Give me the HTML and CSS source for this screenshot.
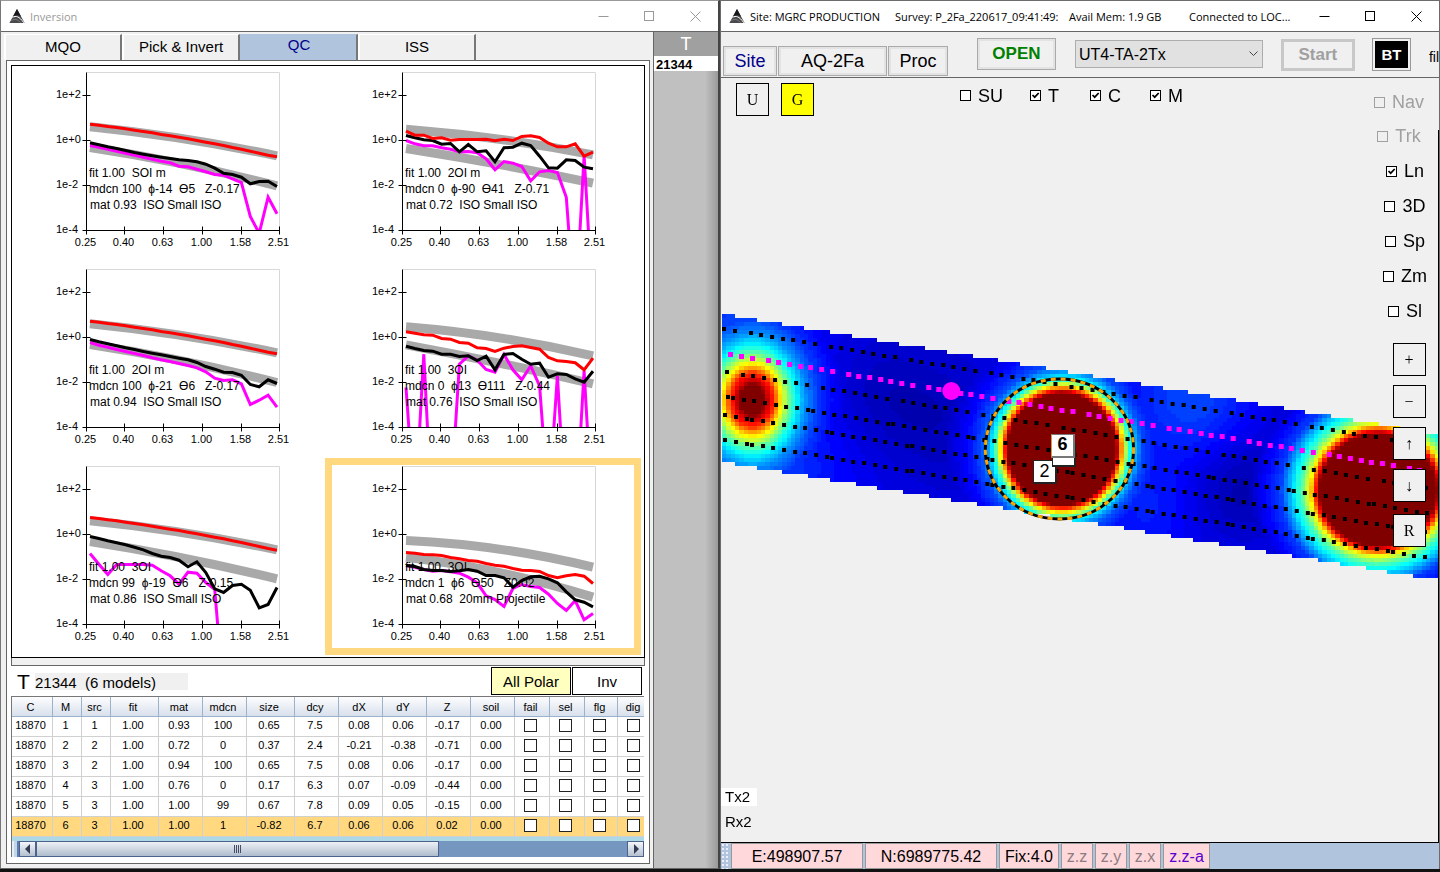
FILE: index.html
```html
<!DOCTYPE html>
<html lang="en">
<head>
<meta charset="utf-8">
<title>Inversion</title>
<link rel="stylesheet" href="styles.css">
</head>
<body>
<svg class="defs" aria-hidden="true">
  <symbol id="logo" viewBox="0 0 16 16">
    <path d="M8 1 L15.600 15 H0.400 Z" fill="#4a4a4e"/>
    <path d="M8 1 L12 8.500 C9 6.800 6.500 7.200 4 8.400 Z" fill="#17171c"/>
    <path d="M3.500 9.300 C7 7.600 10 8 14.800 14.800" fill="none" stroke="#fff" stroke-width="1"/>
    <path d="M2.500 12.500 C6 10.500 9 11.500 11.500 14.800" fill="none" stroke="#999" stroke-width=".6"/>
  </symbol>
  <symbol id="min" viewBox="0 0 11 11"><path d="M0.500 5.500 H10.500" stroke="currentColor"/></symbol>
  <symbol id="max" viewBox="0 0 11 11"><rect x=".5" y=".5" width="9" height="9" fill="none" stroke="currentColor"/></symbol>
  <symbol id="close" viewBox="0 0 11 11"><path d="M.5 .5 L10.500 10.500 M10.500 .5 L.5 10.500" stroke="currentColor"/></symbol>
</svg>

<main class="desktop">
<section class="window inversion">
  <header class="titlebar inactive">
    <svg class="logo"><use href="#logo"/></svg>
    <span class="caption">Inversion</span>
    <div class="controls">
      <button aria-label="Minimize"><svg><use href="#min"/></svg></button>
      <button aria-label="Maximize"><svg><use href="#max"/></svg></button>
      <button aria-label="Close"><svg><use href="#close"/></svg></button>
    </div>
  </header>
  <div class="inversion-body">
    <div class="work">
      <nav class="tabs">
        <button>MQO</button>
        <button>Pick &amp; Invert</button>
        <button class="current">QC</button>
        <button>ISS</button>
      </nav>
      <div class="pane">
        <div class="charts" id="charts"></div>
        <div class="splitter"></div>
        <div class="model-bar">
          <span class="big-t">T</span>
          <span class="model-label">21344&nbsp; (6 models)</span>
          <div class="model-actions">
            <button class="polar">All Polar</button>
            <button>Inv</button>
          </div>
        </div>
        <div class="grid">
          <table>
            <colgroup>
              <col class="w41"><col class="w29"><col class="w29"><col class="w48"><col class="w44"><col class="w44"><col class="w48"><col class="w44"><col class="w44"><col class="w44"><col class="w44"><col class="w44"><col class="w35"><col class="w35"><col class="w33"><col>
            </colgroup>
            <thead>
              <tr><th>C</th><th>M</th><th>src</th><th>fit</th><th>mat</th><th>mdcn</th><th>size</th><th>dcy</th><th>dX</th><th>dY</th><th>Z</th><th>soil</th><th>fail</th><th>sel</th><th>flg</th><th>dig</th></tr>
            </thead>
            <tbody>
              <tr><td>18870</td><td>1</td><td>1</td><td>1.00</td><td>0.93</td><td>100</td><td>0.65</td><td>7.5</td><td>0.08</td><td>0.06</td><td>-0.17</td><td>0.00</td><td><input type="checkbox" aria-label="fail 1"></td><td><input type="checkbox" aria-label="sel 1"></td><td><input type="checkbox" aria-label="flg 1"></td><td><input type="checkbox" aria-label="dig 1"></td></tr>
              <tr><td>18870</td><td>2</td><td>2</td><td>1.00</td><td>0.72</td><td>0</td><td>0.37</td><td>2.4</td><td>-0.21</td><td>-0.38</td><td>-0.71</td><td>0.00</td><td><input type="checkbox" aria-label="fail 2"></td><td><input type="checkbox" aria-label="sel 2"></td><td><input type="checkbox" aria-label="flg 2"></td><td><input type="checkbox" aria-label="dig 2"></td></tr>
              <tr><td>18870</td><td>3</td><td>2</td><td>1.00</td><td>0.94</td><td>100</td><td>0.65</td><td>7.5</td><td>0.08</td><td>0.06</td><td>-0.17</td><td>0.00</td><td><input type="checkbox" aria-label="fail 3"></td><td><input type="checkbox" aria-label="sel 3"></td><td><input type="checkbox" aria-label="flg 3"></td><td><input type="checkbox" aria-label="dig 3"></td></tr>
              <tr><td>18870</td><td>4</td><td>3</td><td>1.00</td><td>0.76</td><td>0</td><td>0.17</td><td>6.3</td><td>0.07</td><td>-0.09</td><td>-0.44</td><td>0.00</td><td><input type="checkbox" aria-label="fail 4"></td><td><input type="checkbox" aria-label="sel 4"></td><td><input type="checkbox" aria-label="flg 4"></td><td><input type="checkbox" aria-label="dig 4"></td></tr>
              <tr><td>18870</td><td>5</td><td>3</td><td>1.00</td><td>1.00</td><td>99</td><td>0.67</td><td>7.8</td><td>0.09</td><td>0.05</td><td>-0.15</td><td>0.00</td><td><input type="checkbox" aria-label="fail 5"></td><td><input type="checkbox" aria-label="sel 5"></td><td><input type="checkbox" aria-label="flg 5"></td><td><input type="checkbox" aria-label="dig 5"></td></tr>
              <tr class="selected"><td>18870</td><td>6</td><td>3</td><td>1.00</td><td>1.00</td><td>1</td><td>-0.82</td><td>6.7</td><td>0.06</td><td>0.06</td><td>0.02</td><td>0.00</td><td><input type="checkbox" aria-label="fail 6"></td><td><input type="checkbox" aria-label="sel 6"></td><td><input type="checkbox" aria-label="flg 6"></td><td><input type="checkbox" aria-label="dig 6"></td></tr>
            </tbody>
          </table>
          <div class="hscroll">
            <span class="grip"></span>
            <button aria-label="Scroll left"><svg viewBox="0 0 8 10"><path d="M6 0 V10 L1 5Z" fill="#333c55"/></svg></button>
            <span class="thumb"><svg viewBox="0 0 8 8"><path d="M.5 0V8M2.500 0V8M4.500 0V8M6.500 0V8" stroke="#444c66"/></svg></span>
            <span class="track"></span>
            <button aria-label="Scroll right"><svg viewBox="0 0 8 10"><path d="M2 0 V10 L7 5Z" fill="#333c55"/></svg></button>
          </div>
        </div>
      </div>
    </div>
    <aside class="targets">
      <h2>T</h2>
      <p>21344</p>
    </aside>
  </div>
</section>

<section class="window survey">
  <header class="titlebar">
    <svg class="logo"><use href="#logo"/></svg>
    <div class="captions">
      <span class="c-site">Site: MGRC PRODUCTION</span>
      <span class="c-survey">Survey: P_2Fa_220617_09:41:49:</span>
      <span class="c-mem">Avail Mem: 1.9 GB</span>
      <span>Connected to LOC...</span>
    </div>
    <div class="controls">
      <button aria-label="Minimize"><svg><use href="#min"/></svg></button>
      <button aria-label="Maximize"><svg><use href="#max"/></svg></button>
      <button aria-label="Close"><svg><use href="#close"/></svg></button>
    </div>
  </header>
  <div class="toolbar">
    <div class="menu">
      <button class="site">Site</button>
      <button class="aq">AQ-2Fa</button>
      <button class="proc">Proc</button>
    </div>
    <button class="open">OPEN</button>
    <select aria-label="Configuration"><option>UT4-TA-2Tx</option></select>
    <button class="start" disabled>Start</button>
    <button class="bt"><span>BT</span></button>
    <span class="file">fil</span>
  </div>
  <div class="map">
    <canvas id="heat" width="166" height="67"></canvas>
    <svg class="overlay" id="overlay" viewBox="0 0 717 764" preserveAspectRatio="none" aria-hidden="true"></svg>
    <span class="pin pin-2">2</span>
    <span class="pin pin-back"></span>
    <span class="pin pin-6">6</span>

    <div class="map-top">
      <button class="sq">U</button>
      <button class="sq yellow">G</button>
      <div class="checks">
        <label><input type="checkbox">SU</label>
        <label><input type="checkbox" checked>T</label>
        <label><input type="checkbox" checked>C</label>
        <label><input type="checkbox" checked>M</label>
      </div>
    </div>
    <div class="map-side">
      <label class="off"><input type="checkbox" disabled>Nav</label>
      <label class="off"><input type="checkbox" disabled>Trk</label>
      <label><input type="checkbox" checked>Ln</label>
      <label><input type="checkbox">3D</label>
      <label><input type="checkbox">Sp</label>
      <label><input type="checkbox">Zm</label>
      <label><input type="checkbox">Sl</label>
      <div class="zoomers">
        <button class="sq">+</button>
        <button class="sq">−</button>
        <button class="sq">↑</button>
        <button class="sq">↓</button>
        <button class="sq reset">R</button>
      </div>
    </div>
    <div class="trx"><span class="tx">Tx2</span><span>Rx2</span></div>
  </div>
  <footer class="status">
    <span class="dots"></span>
    <span class="cell coord">E:498907.57</span>
    <span class="cell coord">N:6989775.42</span>
    <span class="cell fix">Fix:4.0</span>
    <span class="cell dim">z.z</span>
    <span class="cell dim">z.y</span>
    <span class="cell dim">z.x</span>
    <span class="cell za">z.z-a</span>
  </footer>
</section>
</main>
<script src="app.js"></script>
</body>
</html>
```

FILE: styles.css
```css
* { box-sizing: border-box; }
body {
  margin: 0;
  background: #111;
  color: #000;
  font-family: "Liberation Sans", Arial, sans-serif;
}
button, input, select { font-family: inherit; margin: 0; color: inherit; }
button { padding: 0; border: 0; background: none; border-radius: 0; }
.defs { position: absolute; width: 0; height: 0; }

.desktop { display: flex; min-height: 100vh; padding-bottom: 3px; }
.window {
  width: 50%;
  min-width: 0;
  display: flex;
  flex-direction: column;
  background: #f0f0f0;
  border: 1px solid #6b6b6b;
}
.inversion { border-color: #999 #444 #666 #777; border-right-width: 2px; }
.survey { border-bottom: 0; }

/* title bars */
.titlebar {
  display: flex;
  align-items: center;
  height: 31px;
  padding-left: 8px;
  background: #fff;
  border-bottom: 1px solid #666;
  font: 11px "Open Sans", "Noto Sans", sans-serif;
}
.logo { width: 16px; height: 16px; flex: none; margin-right: 5px; }
.inactive { color: #999; }
.caption { flex: 1; }
.captions { flex: 1; display: flex; min-width: 0; white-space: nowrap; }
.c-site { width: 145px; }
.c-survey { width: 174px; }
.c-mem { width: 120px; }
.controls { display: flex; height: 100%; }
.controls button { width: 46px; display: flex; align-items: center; justify-content: center; }
.controls button svg { width: 11px; height: 11px; }

/* inversion window */
.inversion-body { flex: 1; display: flex; }
.work { flex: 1; min-width: 0; display: flex; flex-direction: column; padding: 0 3px 4px 5px; }
.tabs { display: flex; height: 28px; padding-top: 2px; margin-left: -2px; }
.tabs button {
  width: 118px;
  padding-bottom: 3px;
  font-size: 15px;
  border-top: 1px solid #fff;
  border-left: 2px solid #fff;
  border-right: 2px solid #777;
}
.tabs .current { background: #b0c4de; border-top-color: #b0c4de; border-left-color: #b0c4de; color: #00008b; padding-bottom: 6px; }
.pane {
  flex: 1;
  background: #fff;
  border: 1px solid #666;
  padding: 4px 4px 6px;
}
.charts {
  display: grid;
  grid-template-columns: 1fr 1fr;
  border: 1px solid #000;
}
.chart { display: block; width: 316px; height: 197px; overflow: visible; }
.chart .tick { font-size: 11px; }
.chart .note { font-size: 12px; white-space: pre; }
.axis { stroke: #000; fill: none; }
.frame { stroke: #d8d8d8; fill: none; }
.band { stroke: #a9a9a9; stroke-width: 9; fill: none; }
.line { stroke-width: 3; fill: none; }
.highlight { fill: none; stroke: #ffd880; stroke-width: 7; }

.splitter { height: 8px; background: #f0f0f0; border: 1px solid #666; border-top: 0; }
.model-bar { display: flex; height: 30px; padding: 1px 3px 1px 6px; }
.big-t { width: 18px; font-size: 21px; line-height: 29px; }
.model-label { width: 153px; height: 17px; margin-top: 6px; background: #f0f0f0; font-size: 15px; line-height: 19px; }
.model-actions { margin-left: auto; display: flex; gap: 1px; }
.model-actions button { width: 70px; height: 28px; border: 1px solid #000; font-size: 15px; background: #fff; }
.model-actions .polar { width: 80px; background: #ffffc0; }

.grid { border: 1px solid #777; border-right: 0; border-bottom: 0; margin-right: 1px; overflow: hidden; }
table { width: 100%; table-layout: fixed; border-collapse: separate; border-spacing: 0; font-size: 11px; }
th {
  height: 20px;
  padding: 0 3px 0 0;
  font-weight: normal;
  background: linear-gradient(#fdfdfe, #d8e0ec);
  border-right: 1px solid #9bb2cc;
  border-bottom: 1px solid #9bb2cc;
}
td {
  height: 20px;
  padding: 0 3px 4px 0;
  text-align: center;
  border-right: 1px solid #d0d0d0;
  border-bottom: 1px solid #d0d0d0;
  line-height: 12px;
}
th:last-child, td:last-child { border-right: 0; padding-left: 4px; padding-right: 0; }
.selected td { background: #ffd880; }
td input { appearance: none; display: block; width: 13px; height: 13px; margin: 2px auto 0; border: 1px solid #222; background: #fff; }
.w29 { width: 29px; } .w33 { width: 33px; } .w35 { width: 35px; }
.w41 { width: 41px; } .w44 { width: 44px; } .w48 { width: 48px; }

.hscroll { display: flex; height: 20px; border-top: 4px solid #add8e6; background: #7596bf; }
.hscroll .grip { width: 7px; border-left: 2px solid #e8eef6; border-right: 2px solid #5b7fae; background: #c5d5e8; }
.hscroll button { width: 17px; border: 1px solid #4c628c; background: linear-gradient(#f4f6fa, #b4c0d0); display: flex; align-items: center; justify-content: center; }
.hscroll svg { width: 8px; height: 10px; }
.thumb { flex: 402; border: 1px solid #4c628c; background: linear-gradient(#eef1f6, #aebccd); display: flex; align-items: center; justify-content: center; }
.track { flex: 188; }

.targets { width: 65px; background: linear-gradient(90deg, #c0c0c0 80%, #9a9a9a); border-left: 1px solid #666; }
.targets h2 { margin: 0; height: 24px; background: #a0a0a0; color: #fff; font-size: 18px; font-weight: normal; line-height: 25px; text-align: center; }
.targets p { margin: 0; height: 15px; padding-left: 2px; background: #fff; font-size: 13px; font-weight: bold; line-height: 17px; }

/* survey window */
.toolbar { display: flex; height: 46px; padding-left: 2px; border-bottom: 1px solid #666; overflow: hidden; }
.menu { display: flex; gap: 1px; width: 254px; padding-top: 14px; }
.menu button { height: 30px; border: 1px solid #aaa; box-shadow: inset 0 0 0 2px #e3e3e3; font-size: 18px; }
.menu .site { width: 54px; color: #00008b; }
.menu .aq { width: 109px; }
.menu .proc { width: 60px; }
.open { width: 79px; height: 32px; margin: 6px 19px 0 0; border: 1px solid #aaa; box-shadow: inset 0 0 0 2px #e3e3e3; font-size: 17px; font-weight: bold; color: #008000; }
.toolbar select {
  appearance: none;
  width: 188px;
  height: 28px;
  margin: 8px 18px 0 0;
  padding: 0 3px;
  border: 1px solid #adadad;
  border-radius: 0;
  background: #e1e1e1 url("data:image/svg+xml,%3Csvg xmlns='http://www.w3.org/2000/svg' width='9' height='6'%3E%3Cpath d='M.5 .5 L4.500 4.500 L8.500 .5' fill='none' stroke='%23444'/%3E%3C/svg%3E") no-repeat right 4px center;
  font-size: 16px;
}
.start { width: 74px; height: 32px; margin: 7px 17px 0 0; border: 3px solid #c8c8c8; font-size: 17px; font-weight: bold; color: #a0a0a0; }
.bt { width: 39px; height: 33px; margin: 6px 18px 0 0; padding: 2px; border: 1px solid #999; font-size: 15px; font-weight: bold; color: #fff; }
.bt span { display: block; height: 27px; line-height: 28px; background: #000; }
.file { flex: none; margin-top: 16px; font-size: 14px; line-height: 18px; }

.map { position: relative; flex: 1; min-height: 510px; overflow: hidden; }
.map::after { content: ""; position: absolute; top: 52px; right: 0; bottom: 0; width: 1px; background: #000; }
#heat { position: absolute; left: 1px; top: 236px; width: calc(100% - 1px); height: 268px; image-rendering: pixelated; }
.overlay { position: absolute; left: 0; top: 0; width: 100%; height: 764px; }
.pin { position: absolute; width: 24px; height: 24px; border: 1px solid #222; border-width: 1px 2px 2px 1px; background: #fff; font-size: 18px; line-height: 20px; text-align: center; }
.pin-2 { left: 312px; top: 382px; }
.pin-back { left: 331px; top: 365px; }
.pin-6 { left: 330px; top: 356px; border-color: #777; border-left-color: #caa030; font-weight: bold; line-height: 18px; }

.map-top { position: relative; display: flex; gap: 12px; padding: 5px 0 0 15px; }
.sq { width: 33px; height: 33px; border: 1px solid #000; background: #f0f0f0; font: 16px "Liberation Serif", serif; }
.yellow { background: #ff0; }
.checks { display: flex; margin-left: 134px; height: 25px; }
.checks label { width: 60px; }
.checks label:first-child { width: 70px; }
label { display: flex; align-items: center; gap: 7px; font-size: 18px; line-height: 20px; }
label input { appearance: none; width: 11px; height: 11px; border: 1px solid #000; background: #fff; }
label input:checked { background: #fff url("data:image/svg+xml,%3Csvg xmlns='http://www.w3.org/2000/svg' viewBox='0 0 9 9'%3E%3Cpath d='M1.500 4 L3.700 6.200 L7.700 2' fill='none' stroke='%23000' stroke-width='1.700'/%3E%3C/svg%3E"); }
label input:disabled { border-color: #a0a0a0; background: #f0f0f0; }
.map-side { position: absolute; right: 0; top: 14px; width: 68px; display: flex; flex-direction: column; align-items: center; gap: 15px; }
.map-side .off { color: #a0a0a0; margin-right: 12px; }
.map-side .off:first-child { margin-bottom: -1px; }
.zoomers { display: flex; flex-direction: column; gap: 9px; margin: 7px 0 0 8px; }
.zoomers .reset { margin-top: 3px; }
.trx { position: absolute; left: 0; bottom: 11px; font-size: 15px; line-height: 18px; display: flex; flex-direction: column; gap: 7px; }
.trx span { padding: 0 5px 0 4px; }
.tx { background: #fff; }

.status { display: flex; gap: 2px; height: 27px; background: #b0c4de; border-top: 1px solid #000; font-size: 16px; }
.dots { width: 8px; background: radial-gradient(circle, #eef 1px, transparent 1px) 0 0 / 4px 4px; }
.cell { border: 1px solid #999; background: #ffd8dc; line-height: 25px; text-align: center; height: 26px; }
.coord { width: 132px; }
.fix { width: 60px; }
.dim { width: 32px; color: #8c7c80; }
.za { width: 47px; color: #5a00d0; }
```

FILE: app.js
```js
const NS = 'http://www.w3.org/2000/svg';
function add(parent, tag, attrs, text) {
  const node = document.createElementNS(NS, tag);
  for (const key in attrs) node.setAttribute(key, attrs[key]);
  if (text !== undefined) node.textContent = text;
  parent.appendChild(node);
  return node;
}

/* Decay charts. Values are thirds of a pixel, measured down from each chart's own base. */
const red1 = [371,374,378,381,385,389,393,397,402,406,410,415,420,425,430,435,441,446,452,458,464,469];
const shift = (list, d) => list.map(v => v + d);
const charts = [
  { top: 216, bands: [[379,415,466],[441,491,556]], red: red1,
    black: [427,433,439,444,450,456,461,466,470,474,478,480,484,491,503,518,522,530,550,543,542,558],
    mag: [435,440,446,452,458,464,470,476,482,487,497,499,506,514,522,524,535,546,648,698,590,640],
    notes: ['fit 1.00  SOI m','mdcn 100  ϕ-14  Ɵ5   Z-0.17','mat 0.93  ISO Small ISO'] },
  { top: 216, bands: [[386,416,463],[444,492,548]],
    red: [392,404,404,414,412,419,417,417,417,416,421,416,420,408,406,411,428,439,439,430,467,455],
    black: [405,412,418,420,431,429,454,432,454,451,484,442,440,428,435,467,502,503,478,480,500,505],
    mag: [420,430,436,436,442,446,454,453,457,475,508,483,488,498,541,514,510,516,590,950,465,927],
    notes: ['fit 1.00  2OI m','mdcn 0  ϕ-90  Ɵ41   Z-0.71','mat 0.72  ISO Small ISO'] },
  { top: 31, bands: [[194,230,281],[256,306,370]], red: shift(red1, -185),
    black: [241,248,254,260,266,271,277,282,287,292,297,302,310,322,330,339,340,348,376,383,362,373],
    mag: [250,258,264,271,277,283,289,296,302,307,313,319,326,338,357,364,362,374,436,423,408,444],
    notes: ['fit 1.00  2OI m','mdcn 100  ϕ-21  Ɵ6   Z-0.17','mat 0.94  ISO Small ISO'] },
  { top: 31, bands: [[203,236,290],[257,312,374]],
    red: [218,222,227,228,238,240,250,252,266,268,277,267,262,260,265,270,295,305,307,311,332,297],
    black: [261,268,274,276,285,285,292,290,304,291,332,286,283,300,315,312,354,344,346,359,369,336],
    mag: [385,760,285,819,800,738,315,290,303,331,339,286,332,362,320,380,740,350,800,800,335,800],
    notes: ['fit 1.00  3OI','mdcn 0  ϕ13  Ɵ111   Z-0.44','mat 0.76  ISO Small ISO'] },
  { top: 34, bands: [[197,233,284],[259,309,371]], red: shift(red1, -184),
    black: [244,250,257,263,269,276,284,295,303,307,315,335,320,352,401,412,391,387,405,458,448,397],
    mag: [295,327,358,328,328,328,328,330,347,362,387,351,354,382,402,720],
    notes: ['fit 1.00  3OI','mdcn 99  ϕ-19  Ɵ6   Z-0.15','mat 0.86  ISO Small ISO'] },
  { top: 34, selected: true, bands: [[256,282,336],[306,352,426]],
    red: [292,294,298,299,301,307,311,316,318,325,330,333,340,345,346,349,361,368,362,358,363,385],
    black: [331,334,343,346,346,349,347,343,348,361,361,368,396,376,365,363,371,383,410,434,441,455],
    mag: [331,336,343,348,346,350,354,366,383,422,433,454,400,388,394,397,417,445,466,436,494,475],
    notes: ['fit 1.00  3OI','mdcn 1  ϕ6  Ɵ50   Z0.02','mat 0.68  20mm Projectile'] }
];
const X0 = 74.5, Y0 = 6.5, W = 193, H = 158;
charts.forEach((c, n) => {
  const svg = add(document.getElementById('charts'), 'svg', { class: 'chart', viewBox: '0 0 316 197' });
  if (c.selected) add(svg, 'rect', { class: 'highlight', x: 0.5, y: 1.5, width: 309, height: 190 });
  const clip = add(svg, 'clipPath', { id: 'plot' + n });
  add(clip, 'rect', { x: X0, y: Y0, width: W, height: H });
  add(svg, 'path', { class: 'frame', d: `M${X0} ${Y0}h${W}v${H}` });
  const g = add(svg, 'g', { 'clip-path': `url(#plot${n})` });
  const y = v => Y0 + (v - c.top) / 3;
  const left = X0 + 3.5, right = X0 + 190.5;
  c.bands.forEach(b => {
    const ctrl = 2 * b[1] - (b[0] + b[2]) / 2;
    add(g, 'path', { class: 'band', d: `M${left} ${y(b[0])}Q${(left + right) / 2} ${y(ctrl)} ${right} ${y(b[2])}` });
  });
  const draw = (vals, color) => add(g, 'polyline', {
    class: 'line', stroke: color,
    points: vals.map((v, i) => `${(left + i * 187 / 21).toFixed(1)},${y(v).toFixed(1)}`).join(' ')
  });
  draw(c.mag, '#ff00ff');
  draw(c.black, '#000');
  draw(c.red, '#ff0000');
  add(svg, 'path', { class: 'axis', d: `M${X0} ${Y0}V${Y0 + H}H${X0 + W}` });
  ['1e+2', '1e+0', '1e-2', '1e-4'].forEach((t, i) => {
    const ty = Y0 + 23 + i * 45;
    add(svg, 'path', { class: 'axis', d: `M${X0 - 4} ${ty}h8` });
    add(svg, 'text', { class: 'tick', x: 44, y: Math.round(ty + 2) }, t);
  });
  ['0.25', '0.40', '0.63', '1.00', '1.58', '2.51'].forEach((t, i) => {
    const tx = X0 + [0, 38, 77, 116, 155, 193][i];
    add(svg, 'path', { class: 'axis', d: `M${tx} ${Y0 + H - 4}v8` });
    add(svg, 'text', { class: 'tick', x: tx - 1, y: 180, 'text-anchor': 'middle' }, t);
  });
  c.notes.forEach((t, i) => add(svg, 'text', { class: 'note', x: i === 2 ? 78 : 77, y: 111 + i * 16 }, t));
});

/* Heat map of the survey strip, in map coordinates (origin at the map's top left). */
const lerp = (table, r) => {
  if (r <= table[0][0]) return table[0][1];
  for (let i = 1; i < table.length; i++) {
    if (r <= table[i][0]) {
      const [a, b] = [table[i - 1], table[i]];
      return a[1] + (b[1] - a[1]) * (r - a[0]) / (b[0] - a[0]);
    }
  }
  return 0;
};
const blobs = [
  { x: 30, y: 322, sy: 1.25, t: [[11,1.02],[15,.94],[22,.82],[29,.64],[37,.48],[45,.36],[54,.26],[66,.18],[90,.1],[120,0]] },
  { x: 340, y: 371, sy: 1.03, t: [[54,1.02],[57,.86],[62,.62],[67,.42],[73,.3],[80,.2],[95,.13],[120,.06]] },
  { x: 656, y: 412, sy: .96, t: [[58,1.02],[62,.86],[68,.63],[76,.46],[86,.33],[98,.18],[120,.1],[140,0]] }
];
const shades = [[160,315,60,-.04],[230,350,70,-.04],[520,410,50,-.06],[470,320,60,.09],[340,440,50,-.05],[590,330,50,-.03],[20,250,60,.08],[40,380,80,.08],[420,430,50,.05]];
const field = (x, y) => {
  let v = .105;
  for (const s of shades) v += s[3] * Math.exp(-((x - s[0]) ** 2 + (y - s[1]) ** 2) / (s[2] * s[2]));
  for (const b of blobs) v = Math.max(v, lerp(b.t, Math.hypot(x - b.x, (y - b.y) / b.sy)));
  return v;
};
const jet = v => [3, 2, 1].map(k => Math.round(255 * Math.max(0, Math.min(1, 1.5 - Math.abs(4 * v - k)))));
const canvas = document.getElementById('heat');
const ctx = canvas.getContext('2d');
for (let i = 0; i < 166; i++) {
  for (let j = 0; j < 67; j++) {
    const x = (i + .5) * 717 / 166, y = 236 + (j + .5) * 4;
    if (y < 236 + x * .1676 || y > 384 + x * .165) continue;
    ctx.fillStyle = `rgb(${jet(Math.min(1, Math.round(field(x, y) * 64) / 64))})`;
    ctx.fillRect(i, j, 1, 1);
  }
}

/* Survey lines. */
const overlay = document.getElementById('overlay');
const wide = [16, 10, 11, 11, 10, 11, 11];
const tight = [5, 11, 10, 11, 11, 10, 11, 11];
const tracks = [
  { x: 3, y: 251, k: .1665, gaps: wide, phase: 6 },
  { x: 6, y: 294, k: .1665, gaps: wide, phase: 0 },
  { x: 7, y: 319, k: .1665, gaps: tight, phase: 0 },
  { x: 4, y: 337, k: .168, gaps: tight, phase: 6 },
  { x: 4, y: 362, k: .168, gaps: tight, phase: 6 }
];
tracks.forEach(t => {
  let x = t.x, n = t.phase;
  while (x < 706) {
    add(overlay, 'rect', { x: Math.round(x) - 2, y: Math.round(t.y + (x - t.x) * t.k) - 2, width: 4, height: 4 });
    x += t.gaps[n++ % t.gaps.length];
  }
});
for (let x = 9, n = 5; x < 704; x += wide[n++ % 7]) {
  add(overlay, 'rect', { x: x - 2, y: Math.round(276 + (x - 9) * .168) - 2, width: 5, height: 5, fill: '#f0f' });
}
add(overlay, 'circle', { cx: 230, cy: 313, r: 9, fill: '#f0f' });
add(overlay, 'ellipse', { cx: 338, cy: 371, rx: 74, ry: 70, fill: 'none', stroke: '#000', 'stroke-width': 3 });
add(overlay, 'ellipse', { cx: 338, cy: 371, rx: 74, ry: 70, fill: 'none', stroke: '#ffa500', 'stroke-width': 3, 'stroke-dasharray': '5 5' });
```
